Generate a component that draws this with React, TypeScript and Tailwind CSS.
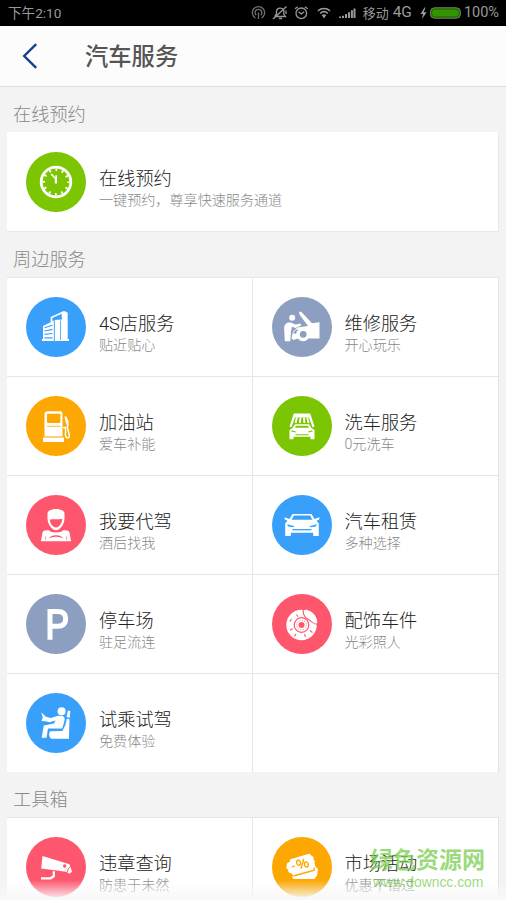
import React from 'react';

interface Service {
  title: string;
  desc: string;
  color: string;
  icon: React.ReactNode;
}

/* ── Icons, all drawn on a 60×60 disc ── */
const ClockIcon = (
  <>
    <circle cx="30" cy="30" r="14.8" fill="none" stroke="#fff" strokeWidth="2.8" />
    <circle cx="30" cy="30" r="12.2" fill="none" stroke="#fff" strokeWidth="2.6" strokeDasharray="1.8 4.588" strokeDashoffset="0.9" />
    <path d="M28.8 31.5V27L24.5 22.6L26 21.6L29.3 25.5V23.2H31V31.5Z" fill="#fff" />
  </>
);

const BuildingIcon = (
  <>
    <path d="M25.5 25V20.5L38 14.8" fill="none" stroke="#fff" strokeWidth="1.7" />
    <path d="M35.5 16.8L38.5 14L41.7 15.8V42H43V44H28.5V23L36 22.5Z" fill="#fff" />
    <path d="M17 29L28 23.5V44H16V42H17Z" fill="#fff" />
    <path d="M18.5 30.8L26.5 28.3M18.5 34L26.5 32.3M18.5 37.3L26.5 36.5M18.5 40.8H26.5" stroke="#38a0fb" strokeWidth="1.2" />
    <path d="M28.3 24V44M34.5 23.5V43" stroke="#38a0fb" strokeWidth="0.8" />
  </>
);

const RepairIcon = (
  <g fill="#fff">
    <circle cx="20.2" cy="20.8" r="3" />
    <path d="M12.8 44L12.2 32C12 27 15 24.7 18.5 25.6L23.5 27.5L28.5 26.6L29.2 28.5L23.5 31L20 29.8L19 34L18.3 44.3H13Z" />
    <path d="M27 15L29 14.6L40 26.2L47.5 25.3V41.5H36.2C34.5 45 28 45 26 41.5L21.5 43L19.5 41.5L21 34.5L25.5 30.5L36 29L27.8 18Z" />
    <circle cx="31.2" cy="37.3" r="3.4" fill="#8d9fc1" />
    <path d="M20.8 37.5C21.5 33.5 24.5 32 27 32.6L25 34L24 37L22 36Z" fill="#8d9fc1" />
  </g>
);

const PumpIcon = (
  <>
    <path d="M21.8 15.2H34.2C35.6 15.2 36.5 16.2 36.5 17.5V41.5H38V46H17V41.5H18.5V17.5C18.5 16.2 19.8 15.2 21.8 15.2Z" fill="#fff" />
    <rect x="21" y="17.7" width="13.4" height="9.3" rx="1" fill="#fca702" />
    <path d="M18.5 41H36.5" stroke="#fca702" strokeWidth="1.1" />
    <path d="M21 30.3H34.5" stroke="#fca702" strokeWidth="0.8" />
    <path d="M39.3 21L41.5 25.5V32L43.3 39C43.8 42.5 40 43 39.5 39.5V31.5H37" fill="none" stroke="#fff" strokeWidth="1.5" />
    <path d="M38.5 20.5H40.3L42.5 25V29.5L39.8 27Z" fill="#fff" />
  </>
);

const WashIcon = (
  <>
    <path d="M21.8 17.5H38.2L42.5 30.5L40.5 31.2L37 21.5H23L19.5 31.2L17.5 30.5Z" fill="#fff" />
    <path d="M25 21.5L23.5 27M28.5 21.5L27.8 27M32 21.5L32.4 27M35.2 21.5L36.6 27" stroke="#fff" strokeWidth="1.9" />
    <path d="M23 28.2H37L39.5 32L42.5 34V43.3H38.5V40.8H21.5V43.3H17.5V34L20.5 32Z" fill="#fff" />
    <path d="M24.2 29.8L22.9 31.7H37.1L35.8 29.8Z" fill="#7cc502" />
    <path d="M19.5 34.9L23.8 36M40.5 34.9L36.2 36M23.5 38.7H36.5" stroke="#7cc502" strokeWidth="1.1" />
  </>
);

const DriverIcon = (
  <g fill="#fff">
    <path d="M21.5 24V18.5C21.8 12.5 38.2 12.5 38.5 18.5V24C38 31 33 35.2 30 35.2S22 31 21.5 24Z" />
    <path d="M23.7 24.5C28 24.3 33 24.6 36.3 23.8C36 29.5 32.2 32.5 30 32.5S24 29.5 23.7 24.5Z" fill="#fe566d" />
    <path d="M15 46.2L16.5 37.5C17 35.8 18.5 35.2 23 35.2C25 38.2 35 38.2 37 35.2C41.5 35.2 43 35.8 43.5 37.5L45 46.2Z" />
    <path d="M22.5 43.5C25 39 35 39 37.5 43.5L35 42.5C32 41.4 28 41.4 25 42.5Z" fill="#fe566d" />
    <path d="M19.5 41.5V45M40.5 41.5V45" stroke="#fe566d" strokeWidth="0.6" />
  </g>
);

const CarIcon = (
  <>
    <path d="M20.5 19H39.5L42.5 24L47.5 22.3L47.2 24.5L44.5 25.8L46.8 28.5V41H41.2V37.8H18.8V41H13.2V28.5L15.5 25.8L12.8 24.5L12.5 22.3L17.5 24Z" fill="#fff" />
    <path d="M21.9 20.6L19.6 24.7H40.4L38.1 20.6Z" fill="#38a0fb" />
    <path d="M15.2 29.2L22.5 31.3L21.5 32.2L16 31.4ZM44.8 29.2L37.5 31.3L38.5 32.2L44 31.4Z" fill="#38a0fb" />
    <path d="M20.5 34.7H39.5" stroke="#38a0fb" strokeWidth="1.3" />
  </>
);

const ParkingIcon = (
  <path d="M24 45.8V17.5H31.5C37.2 17.5 39.7 20 39.7 24.7C39.7 29.8 36.8 32.2 31.5 32.2H24" fill="none" stroke="#fff" strokeWidth="5" />
);

const BrakeIcon = (
  <>
    <circle cx="29.5" cy="31" r="15.2" fill="#fff" />
    <path d="M31.2 15V18C31.5 21 34 24.5 38 26.4C40 27.5 40.5 30 46 30.3" fill="none" stroke="#fe566d" strokeWidth="1.2" />
    <path d="M32 17C34 15 35.5 16.2 36.5 16.5C41.8 18.3 45 23 45.3 28.5C44.5 30 42.8 29.8 42 29L36.5 24.5C33.5 22 31.5 20 32 17Z" fill="#fff" />
    <circle cx="29.5" cy="31" r="7.3" fill="#fff" stroke="#fe566d" strokeWidth="1.2" />
    <circle cx="29.5" cy="31" r="4.8" fill="none" stroke="#fe566d" strokeWidth="0.8" strokeDasharray="1 1.5" />
    <circle cx="29.5" cy="31" r="3" fill="#fe566d" />
    <path d="M24.5 20.5L26 22.8M17.8 27.5L19.5 25M18 36.2L20.8 34.8M22.5 42.5L24 39.8M33.5 43L32.5 40M40.5 38.5L38 36.5" stroke="#fe566d" strokeWidth="1.1" />
  </>
);

const SeatIcon = (
  <g fill="#fff">
    <circle cx="35.6" cy="18.3" r="4" />
    <path d="M42 17.5L44.3 18L43.8 25L40.5 23.8Z" />
    <path d="M15.2 19.3L19.8 23.7L25 25L32 22.8H36C38.5 23.5 39 25.5 38.5 27.5L36.3 35.5H22L20.5 44.8H15.7L17.8 32.5L28 30.5L29.5 27.5L23.5 29.2L19.5 28.3L15.5 28L16.8 24.5Z" />
    <path d="M39.3 32L41 25.5L43.5 26.5L43 42V45.8H25.5C22.8 44.5 22.6 40 24.2 38.3L36.5 38Z" />
  </g>
);

const CameraIcon = (
  <>
    <path d="M16.5 19L43.5 27.2L46 34.5L43.8 36.7L40.2 34.8L15.2 31.5Z" fill="#fff" />
    <path d="M41.5 35L42.3 31.5L45.2 29" fill="none" stroke="#fe566d" strokeWidth="1" />
    <circle cx="38.7" cy="29" r="1.7" fill="#fe566d" />
    <path d="M27.8 34.3V39.3L24.5 41.3H15" fill="none" stroke="#fff" strokeWidth="2.2" />
  </>
);

const CouponIcon = (
  <>
    <path d="M22 34L43 28.5C43.5 31 46 30.5 46 33.5C44.5 34.5 46.5 36.5 45 37.5C45.5 39.5 43 40 42.8 42H21.5C20.5 40.5 19.5 39.5 22 38Z" fill="#fff" />
    <path d="M18.3 22.2L38 16.5C38.5 19.5 42 18.5 41.7 21.5C41.2 23 43.5 23.8 42.7 25.5C42 27 44.5 28 42 29.8L41.8 32.5L21 38.5C20 35 16.5 37 16.3 34C16.8 32 13.5 32 14.5 29.5C15.5 28 13.8 26.5 16.5 25.5C18.5 25 17.5 23.5 18.3 22.2Z" fill="#fff" />
    <path d="M21.5 39L42.2 33.2V30.5" fill="none" stroke="#fca702" strokeWidth="1.3" />
    <g fill="none" stroke="#fca702" strokeWidth="1.4">
      <path d="M20 29.8L22.7 29M29 31.8L31.8 21.7" />
      <ellipse cx="26.6" cy="25.8" rx="1.9" ry="2.6" transform="rotate(-12 26.6 25.8)" />
      <ellipse cx="34.4" cy="27.5" rx="1.9" ry="2.6" transform="rotate(-12 34.4 27.5)" />
    </g>
  </>
);

const booking: Service = {
  title: '在线预约', desc: '一键预约\uff0c尊享快速服务通道', color: '#7cc502', icon: ClockIcon,
};

const nearby: Service[] = [
  { title: '4S店服务', desc: '贴近贴心', color: '#38a0fb', icon: BuildingIcon },
  { title: '维修服务', desc: '开心玩乐', color: '#8d9fc1', icon: RepairIcon },
  { title: '加油站', desc: '爱车补能', color: '#fca702', icon: PumpIcon },
  { title: '洗车服务', desc: '0元洗车', color: '#7cc502', icon: WashIcon },
  { title: '我要代驾', desc: '酒后找我', color: '#fe566d', icon: DriverIcon },
  { title: '汽车租赁', desc: '多种选择', color: '#38a0fb', icon: CarIcon },
  { title: '停车场', desc: '驻足流连', color: '#8d9fc1', icon: ParkingIcon },
  { title: '配饰车件', desc: '光彩照人', color: '#fe566d', icon: BrakeIcon },
  { title: '试乘试驾', desc: '免费体验', color: '#38a0fb', icon: SeatIcon },
];

const tools: Service[] = [
  { title: '违章查询', desc: '防患于未然', color: '#fe566d', icon: CameraIcon },
  { title: '市场活动', desc: '优惠不错过', color: '#fca702', icon: CouponIcon },
];

const ServiceItem: React.FC<{ item: Service }> = ({ item }) => (
  <div className="flex h-full items-center pl-[19px]">
    <svg viewBox="0 0 60 60" className="h-[60px] w-[60px] shrink-0">
      <circle cx="30" cy="30" r="30" fill={item.color} />
      {item.icon}
    </svg>
    <div className="ml-[13px] whitespace-nowrap pt-[13px] font-light">
      <div className="text-[18.2px] leading-[24px] text-[#222]">{item.title}</div>
      <div className="text-[14.1px] leading-[19px] text-[#888]">{item.desc}</div>
    </div>
  </div>
);

const SectionTitle: React.FC<{ children: React.ReactNode }> = ({ children }) => (
  <h2 className="flex h-[45px] items-center pl-[13px] pt-[10px] text-[18.2px] font-light text-[#888]">{children}</h2>
);

/* ── Two-column card with hairlines between the cells ── */
const ServiceGrid: React.FC<{ items: Service[] }> = ({ items }) => (
  <div className="mx-[7px] grid grid-cols-2 border-r border-[#e2e2e2] bg-white">
    {items.map((item, i) => (
      <div
        key={item.title}
        className={`h-[99px] border-t border-[#e6e6e6] ${i % 2 === 0 ? 'border-r' : ''}`}
      >
        <ServiceItem item={item} />
      </div>
    ))}
    {items.length % 2 === 1 && <div className="h-[99px] border-t border-[#e6e6e6]" />}
  </div>
);

const StatusBar = () => (
  <div className="flex h-[26px] items-center bg-black pl-2 pr-[7px] text-[#999]">
    <span className="pt-[2px] text-[13.6px] leading-none">下午2:10</span>
    <div className="ml-auto flex items-center">
      <svg width="118" height="18" viewBox="0 0 118 18" fill="none" stroke="#999" strokeWidth="1.3">
        {/* hotspot */}
        <g stroke="#707070">
          <path d="M4.5 14A6.1 6.1 0 1 1 10.5 14M5.2 11.2A3.4 3.4 0 1 1 9.8 11.2M7.5 8.5V15" />
        </g>
        {/* muted bell */}
        <path d="M24 12L25.5 9.8V7.2C26 3.5 31.5 3.2 32.8 6.3V10.3L34.5 12.5H24ZM28 14.5H31M22 15L35.5 2.5M35 6.5V10" />
        {/* alarm clock */}
        <circle cx="50.3" cy="9.3" r="5.3" />
        <path d="M47.5 7.7L50.3 10L53.2 7.7M44 4.8L46.8 2.8M56.7 4.8L53.8 2.8" />
        {/* wifi */}
        <path d="M67 6.8C70.5 3.8 75.5 3.8 79 6.8M69.2 9.3C71.5 7.3 74.5 7.3 76.8 9.3" strokeWidth="1.6" />
        <path d="M70.7 11.1C72 10 74 10 75.3 11.1L73 14.5Z" fill="#999" stroke="none" />
        {/* signal */}
        <path d="M90.5 14V12.5M93.5 14V11.7M96.5 14V10M99.5 14V8.2M102.4 14V6.2M105 14V4.5" transform="translate(-1.5 0)" strokeWidth="2" />
      </svg>
      <span className="-ml-[6px] text-[13px] leading-none">移动</span>
      <span className="ml-[4px] text-[15.5px] leading-none">4G</span>
      <svg width="41" height="14" viewBox="0 0 41 14" className="ml-[8px]">
        <path d="M4.5 1.5L0.5 8H3L2 13L6.7 6.2H3.8L5.5 1.5Z" fill="#999" />
        <rect x="10.5" y="1.8" width="29.9" height="10.4" rx="4" fill="#349400" stroke="#777" strokeWidth="1" />
        <rect x="11.7" y="3" width="27.5" height="8" rx="3" fill="none" stroke="#184800" strokeWidth="0.7" />
      </svg>
      <span className="ml-[3px] text-[14.5px] leading-none">100%</span>
    </div>
  </div>
);

export default function App() {
  return (
    <div className="relative h-[900px] w-[506px] overflow-hidden bg-[#f3f3f3] font-['Roboto','Noto_Sans_CJK_SC',sans-serif]">
      <StatusBar />

      {/* ── Title bar ── */}
      <header className="flex h-[61px] items-center border-b border-[#dcdcdc] bg-[#fcfcfc] pl-[22px]">
        <svg width="16" height="26" viewBox="0 0 16 26" fill="none" stroke="#134184" strokeWidth="2.4" className="-mt-px">
          <path d="M14.2 1.2L2.2 13L14.2 24.8" />
        </svg>
        <h1 className="ml-[47px] pt-[4px] text-[23.3px] font-medium leading-none text-[#555]">汽车服务</h1>
      </header>

      <main>
        <SectionTitle>在线预约</SectionTitle>
        <div className="mx-[7px] h-[100px] border-b border-r border-[#e8e8e8] bg-white pt-px">
          <ServiceItem item={booking} />
        </div>
        <SectionTitle>周边服务</SectionTitle>
        <ServiceGrid items={nearby} />
        <SectionTitle>工具箱</SectionTitle>
        <ServiceGrid items={tools} />
      </main>

      {/* Fade over the clipped bottom row */}
      <div className="absolute inset-x-0 bottom-0 h-[20px] bg-gradient-to-b from-[#f8f8f8]/0 to-[#f8f8f8]" />

      {/* Watermark */}
      <div className="absolute left-[370px] top-[847px] whitespace-nowrap text-[#79ce50]/75">
        <div className="text-[23px] font-bold leading-[28px]">绿色资源网</div>
        <div className="pl-[3px] font-['Liberation_Sans',sans-serif] text-[13.9px] leading-[14px]">www.downcc.com</div>
      </div>
    </div>
  );
}
